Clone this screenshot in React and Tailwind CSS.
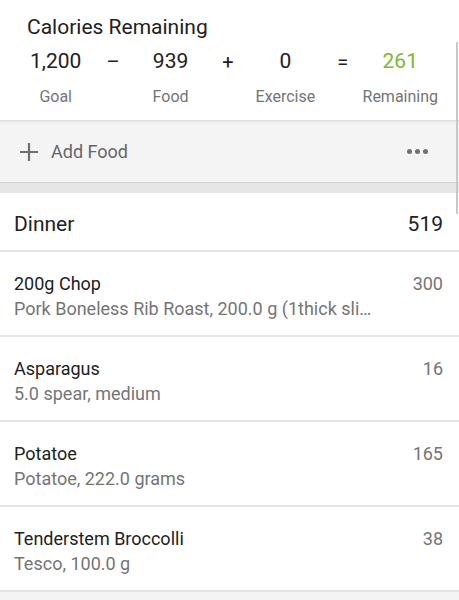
import React from "react";

const items = [
  { name: "200g Chop", desc: "Pork Boneless Rib Roast, 200.0 g (1thick sli…", cal: 300 },
  { name: "Asparagus", desc: "5.0 spear, medium", cal: 16 },
  { name: "Potatoe", desc: "Potatoe, 222.0 grams", cal: 165 },
  { name: "Tenderstem Broccolli", desc: "Tesco, 100.0 g", cal: 38 },
];

function Col({ value, label, green }) {
  return (
    <div className="flex flex-col items-center">
      <div className={`h-[30px] flex items-center text-[21px] ${green ? "text-[#7cb82f]" : "text-[#212121]"}`}>{value}</div>
      <div className="mt-[10px] text-[16px] leading-[20px] text-[#757575] whitespace-nowrap">{label}</div>
    </div>
  );
}

function Op({ sym }) {
  return (
    <div className="flex flex-col items-center">
      <div className="h-[30px] flex items-center text-[20px] text-[#212121]">{sym}</div>
    </div>
  );
}

export default function App() {
  return (
    <div className="relative w-[459px] h-[600px] overflow-hidden bg-[#f4f4f4] font-['Roboto',sans-serif]">
      <div className="bg-white h-[120px] pt-[13px]">
        <div className="pl-[27px] text-[21px] leading-[28px] text-[#212121]">Calories Remaining</div>
        <div className="mt-[6px] ml-[27px] w-[402px] grid grid-cols-7">
          <Col value="1,200" label="Goal" />
          <Op sym="–" />
          <Col value="939" label="Food" />
          <Op sym="+" />
          <Col value="0" label="Exercise" />
          <Op sym="=" />
          <Col value="261" label="Remaining" green />
        </div>
      </div>
      <div className="h-[62px] bg-[#f4f4f4] border-t border-[#dedede] shadow-[inset_0_3px_3px_-2px_rgba(0,0,0,0.08)] flex items-center pl-[19px] pr-[31px]">
        <svg width="20" height="20" viewBox="0 0 20 20" className="shrink-0">
          <path d="M10 1v18M1 10h18" stroke="#707070" strokeWidth="2.2" />
        </svg>
        <span className="ml-[12px] text-[18px] text-[#666666]">Add Food</span>
        <div className="ml-auto flex gap-[3px]">
          <span className="w-[5px] h-[5px] rounded-full bg-[#707070]" />
          <span className="w-[5px] h-[5px] rounded-full bg-[#707070]" />
          <span className="w-[5px] h-[5px] rounded-full bg-[#707070]" />
        </div>
      </div>
      <div className="h-[11px] bg-[#e6e6e6] border-t border-[#d2d2d2]" />
      <div className="bg-white">
        <div className="h-[59px] flex items-center justify-between pl-[14px] pr-[16px] pt-[6px] border-b-2 border-[#e4e4e4]">
          <span className="text-[21px] text-[#212121]">Dinner</span>
          <span className="text-[21px] text-[#212121]">519</span>
        </div>
        {items.map((it) => (
          <div key={it.name} className="h-[85px] flex justify-between pl-[14px] pr-[16px] pt-[19px] border-b-2 border-[#e4e4e4]">
            <div className="min-w-0 w-[380px]">
              <div className="text-[18px] leading-[25px] text-[#212121]">{it.name}</div>
              <div className="text-[18px] leading-[25px] text-[#757575] whitespace-nowrap">{it.desc}</div>
            </div>
            <div className="text-[18px] leading-[25px] text-[#757575]">{it.cal}</div>
          </div>
        ))}
      </div>
      <div className="absolute right-[1px] top-[42px] w-[2px] h-[172px] bg-[#c8c8c8]" />
    </div>
  );
}
